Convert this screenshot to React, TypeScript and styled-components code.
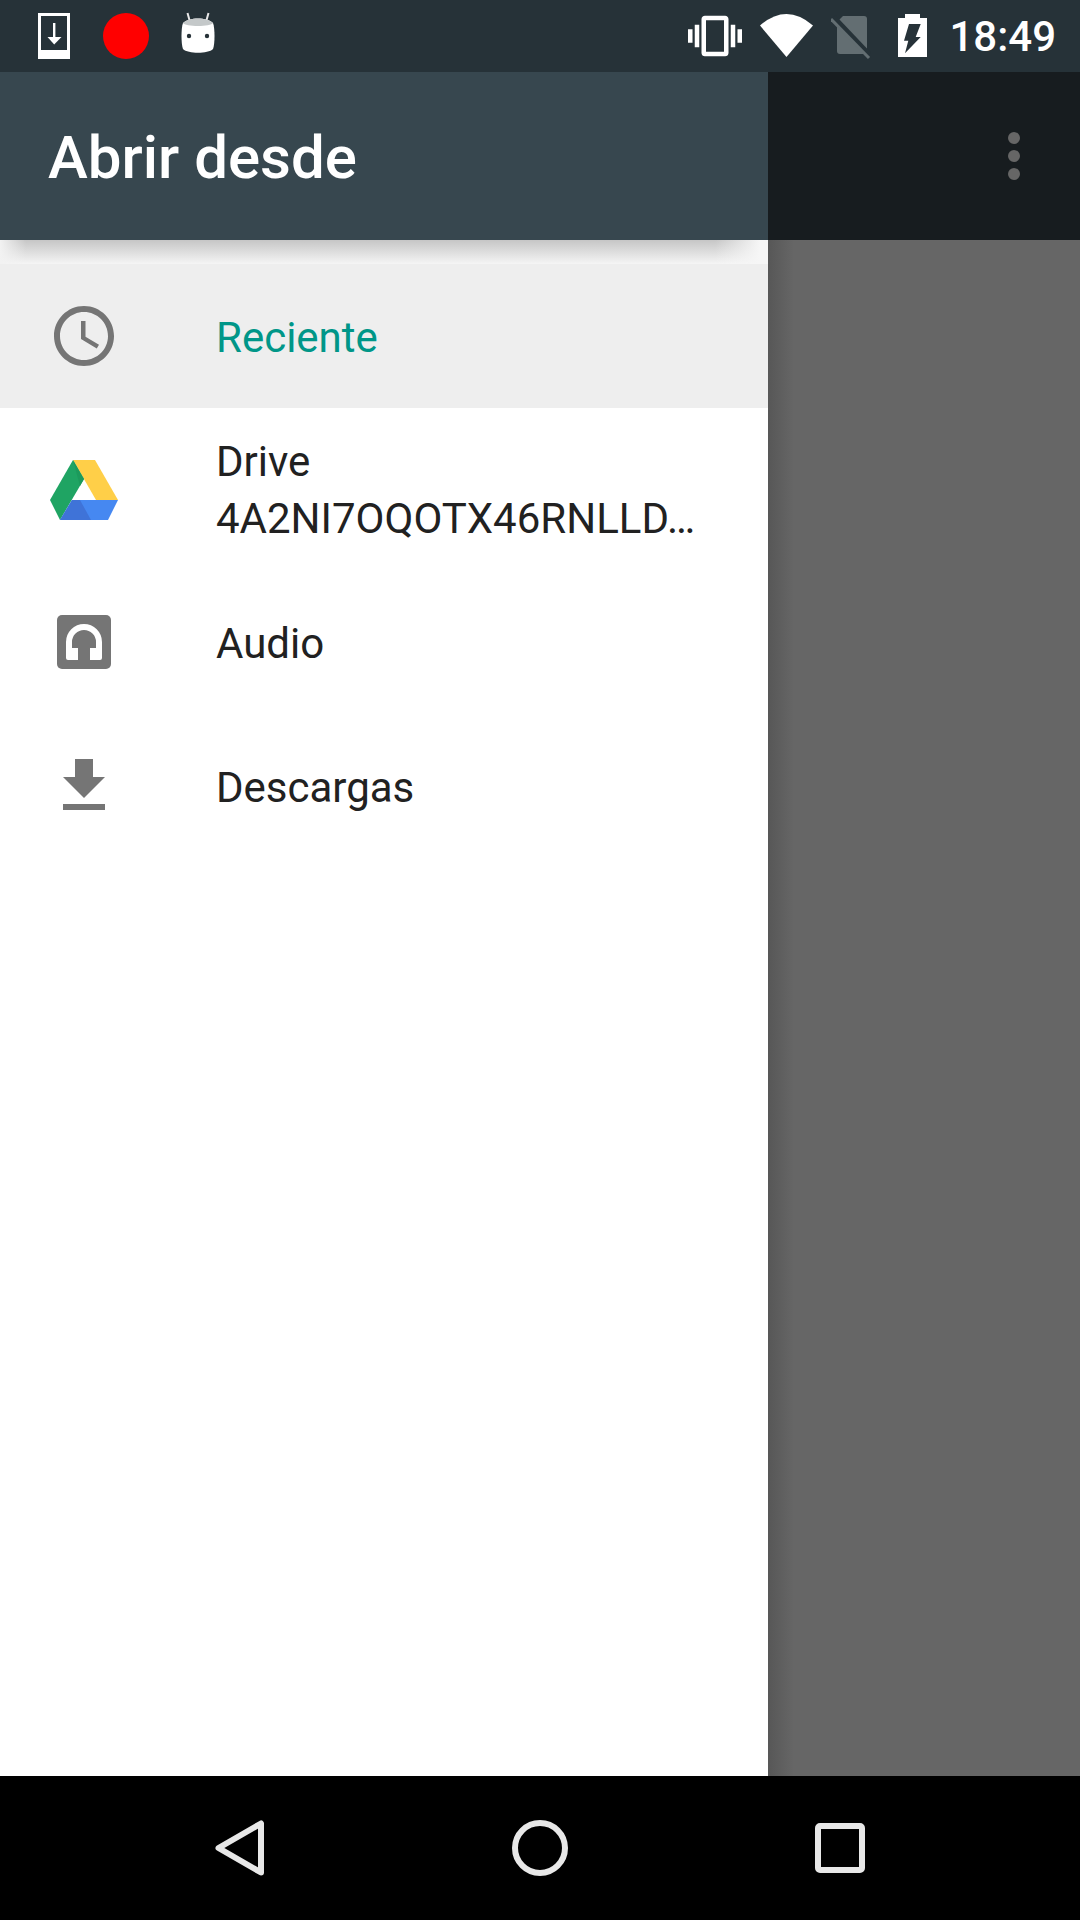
import React from "react";
import styled, { createGlobalStyle } from "styled-components";

const GlobalStyle = createGlobalStyle`
  html, body {
    margin: 0;
    padding: 0;
    background: #000;
  }
  * {
    box-sizing: border-box;
  }
`;

const Screen = styled.div`
  width: 1080px;
  height: 1920px;
  display: flex;
  flex-direction: column;
  overflow: hidden;
  font-family: Roboto, "Liberation Sans", sans-serif;
`;

const StatusBar = styled.div`
  height: 72px;
  flex: none;
  display: flex;
  justify-content: space-between;
  align-items: center;
  padding: 0 24px 0 38px;
  background: #263238;
`;

const StatusGroup = styled.div`
  display: flex;
  align-items: center;
`;

const StatusIcon = styled.svg<{ $gap?: number }>`
  display: block;
  flex: none;
  margin-left: ${p => p.$gap ?? 0}px;
`;

const Clock = styled.span`
  margin-left: 22px;
  padding-top: 2px;
  font-size: 42px;
  font-weight: 500;
  line-height: 72px;
  color: #fff;
`;

const Main = styled.div`
  flex: 1;
  display: flex;
  min-height: 0;
`;

const Drawer = styled.div`
  width: 768px;
  flex: none;
  display: flex;
  flex-direction: column;
  background: #fff;
`;

const AppBar = styled.div`
  height: 168px;
  flex: none;
  display: flex;
  align-items: center;
  padding: 2px 0 0 48px;
  background: #37474f;
`;

const Title = styled.h1`
  margin: 0;
  font-size: 60px;
  font-weight: 500;
  color: #fff;
`;

const HeaderShadow = styled.div`
  height: 24px;
  flex: none;
  background: linear-gradient(to right, #f2f2f2, transparent 26px, transparent 715px, #f6f6f6 760px),
    linear-gradient(to bottom, #c6c6c6, #f5f5f5);
`;

const List = styled.div`
  display: flex;
  flex-direction: column;
`;

const Row = styled.div<{ $selected?: boolean; $height: number }>`
  height: ${p => p.$height}px;
  display: flex;
  align-items: center;
  padding-left: 48px;
  gap: 96px;
  background: ${p => (p.$selected ? "#eeeeee" : "#fff")};
`;

const RowIcon = styled.svg`
  width: 72px;
  height: 72px;
  flex: none;
  display: block;
  fill: #757575;
`;

const RowText = styled.div<{ $selected?: boolean }>`
  padding-top: 2px;
  font-size: 42px;
  line-height: 57px;
  white-space: nowrap;
  color: ${p => (p.$selected ? "#009688" : "#212121")};
`;

const Scrim = styled.div`
  flex: 1;
  display: flex;
  flex-direction: column;
`;

const ScrimBar = styled.div`
  height: 168px;
  flex: none;
  display: flex;
  flex-direction: column;
  align-items: flex-end;
  justify-content: center;
  gap: 6px;
  padding-right: 60px;
  background: #171c1f;
`;

const Dot = styled.span`
  width: 12px;
  height: 12px;
  border-radius: 50%;
  background: #666;
`;

const ScrimBody = styled.div`
  flex: 1;
  background: linear-gradient(to right, #575757, #666 26px);
`;

const NavBar = styled.div`
  height: 144px;
  flex: none;
  display: flex;
  padding: 0 90px;
  background: #000;
`;

const NavButton = styled.div`
  flex: 1;
  display: flex;
  align-items: center;
  justify-content: center;
`;

const NavIcon = styled.svg`
  display: block;
  fill: none;
  stroke: #e8e8e8;
  stroke-width: 6;
  stroke-linejoin: round;
`;

function ClockIcon() {
  return (
    <RowIcon viewBox="0 0 24 24">
      <path d="M11.99 2C6.47 2 2 6.48 2 12s4.47 10 9.99 10C17.52 22 22 17.52 22 12S17.52 2 11.99 2zM12 20c-4.42 0-8-3.58-8-8s3.58-8 8-8 8 3.58 8 8-3.58 8-8 8zm.5-13H11v6l5.25 3.15.75-1.23-4.5-2.67z" />
    </RowIcon>
  );
}

function DriveIcon() {
  return (
    <RowIcon viewBox="0 0 72 72">
      <polygon points="25,7 47,7 70,47 48,47" fill="#ffcf48" />
      <polygon points="25,7 36,26 12,67 2,47" fill="#1fa463" />
      <polygon points="25,7 36,26 32,33" fill="#1c9a5c" />
      <polygon points="24,47 70,47 60,67 12,67" fill="#4688f1" />
      <polygon points="24,47 32,47 43,67 12,67" fill="#3f73d8" />
    </RowIcon>
  );
}

function AudioIcon() {
  return (
    <RowIcon viewBox="0 0 72 72">
      <rect x="9" y="9" width="54" height="54" rx="5" />
      <path
        d="M20 54a2 2 0 0 1-2-2V36a18 18 0 0 1 36 0V52a2 2 0 0 1-2 2H42V42H48V36a12 12 0 0 0-24 0V42H30V54Z"
        fill="#fff"
      />
    </RowIcon>
  );
}

function DownloadIcon() {
  return (
    <RowIcon viewBox="0 0 24 24">
      <path d="M19 9h-4V3H9v6H5l7 7 7-7zM5 18v2h14v-2H5z" />
    </RowIcon>
  );
}

export default function App() {
  return (
    <Screen>
      <GlobalStyle />
      <StatusBar>
        <StatusGroup>
          <StatusIcon width="32" height="72" viewBox="0 0 32 72">
            <path d="M0 13H32V59H0ZM3 16V50H29V16Z" fill="#fff" fillRule="evenodd" />
            <rect x="15" y="23" width="2.4" height="15" fill="#fff" />
            <polygon points="9.5,37 23.5,37 16.2,44.5" fill="#fff" />
          </StatusIcon>
          <StatusIcon $gap={33} width="46" height="46" viewBox="0 0 46 46">
            <circle cx="23" cy="23" r="23" fill="#f00" />
          </StatusIcon>
          <StatusIcon $gap={32} width="34" height="72" viewBox="0 0 34 72">
            <path d="M6.5 13L9 22M27.5 13L25 22" stroke="#e8e8e8" strokeWidth="2" />
            <path
              d="M2 23C8 17 26 17 32 23C34 28 34 44 32 49C27 54 7 54 2 49C0 44 0 28 2 23Z"
              fill="#fff"
            />
            <path d="M2 23C8 17 26 17 32 23C30 27 4 27 2 23Z" fill="#c4c8c9" />
            <circle cx="8" cy="36" r="2.2" fill="#263238" />
            <circle cx="26" cy="36" r="2.2" fill="#263238" />
          </StatusIcon>
        </StatusGroup>
        <StatusGroup>
          <StatusIcon width="54" height="54" viewBox="0 0 24 24" fill="#fff">
            <path d="M0 15h2V9H0v6zm3 2h2V7H3v10zm19-8v6h2V9h-2zm-3 8h2V7h-2v10zM16.5 3h-9C6.67 3 6 3.67 6 4.5v15c0 .83.67 1.5 1.5 1.5h9c.83 0 1.5-.67 1.5-1.5v-15c0-.83-.67-1.5-1.5-1.5zM16 19H8V5h8v14z" />
          </StatusIcon>
          <StatusIcon $gap={18} width="53" height="72" viewBox="0 0 53 72">
            <path d="M0 25.5Q26.5 2.5 53 25.5L26.5 57Z" fill="#fff" />
          </StatusIcon>
          <StatusIcon $gap={18} width="40" height="72" viewBox="0 0 40 72">
            <path
              d="M12 16H33a3 3 0 0 1 3 3V51a3 3 0 0 1-3 3H9a3 3 0 0 1-3-3V22Z"
              fill="#636e72"
            />
            <path d="M2 17L38 55" stroke="#263238" strokeWidth="6" />
            <path d="M0 19L38 58" stroke="#636e72" strokeWidth="3" />
          </StatusIcon>
          <StatusIcon $gap={27} width="29" height="72" viewBox="0 0 29 72">
            <path d="M7 14H22V18H29V57H0V18H7Z" fill="#fff" />
            <polygon points="11,24 22.7,24 17.7,37 22.7,37 7,53.3 10.3,40.7 6,40.7" fill="#263238" />
          </StatusIcon>
          <Clock>18:49</Clock>
        </StatusGroup>
      </StatusBar>
      <Main>
        <Drawer>
          <AppBar>
            <Title>Abrir desde</Title>
          </AppBar>
          <HeaderShadow />
          <List>
            <Row $selected $height={144}>
              <ClockIcon />
              <RowText $selected>Reciente</RowText>
            </Row>
            <Row $height={162}>
              <DriveIcon />
              <RowText>
                Drive
                <br />
                4A2NI7OQOTX46RNLLD…
              </RowText>
            </Row>
            <Row $height={144}>
              <AudioIcon />
              <RowText>Audio</RowText>
            </Row>
            <Row $height={144}>
              <DownloadIcon />
              <RowText>Descargas</RowText>
            </Row>
          </List>
        </Drawer>
        <Scrim>
          <ScrimBar>
            <Dot />
            <Dot />
            <Dot />
          </ScrimBar>
          <ScrimBody />
        </Scrim>
      </Main>
      <NavBar>
        <NavButton>
          <NavIcon width="50" height="56" viewBox="0 0 50 56">
            <path d="M46 3.5V52.5L3.5 28Z" />
          </NavIcon>
        </NavButton>
        <NavButton>
          <NavIcon width="56" height="56" viewBox="0 0 56 56">
            <circle cx="28" cy="28" r="25" />
          </NavIcon>
        </NavButton>
        <NavButton>
          <NavIcon width="50" height="50" viewBox="0 0 50 50">
            <rect x="3" y="3" width="44" height="44" rx="2" />
          </NavIcon>
        </NavButton>
      </NavBar>
    </Screen>
  );
}
